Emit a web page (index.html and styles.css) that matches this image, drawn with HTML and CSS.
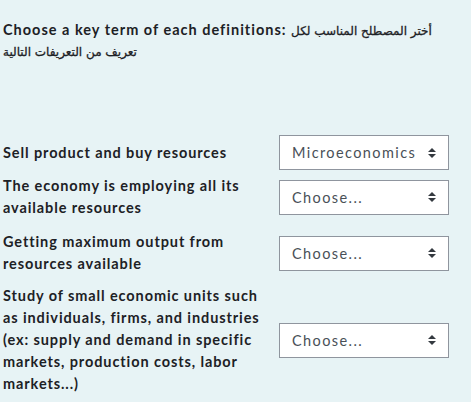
FILE: index.html
```html
<!DOCTYPE html>
<html lang="en">
<head>
<meta charset="utf-8">
<link rel="stylesheet" href="styles.css">
</head>
<body>
<div class="que">
  <p class="qtext">Choose a key term of each definitions: <span class="ar" dir="rtl" lang="ar">أختر المصطلح المناسب لكل تعريف من التعريفات التالية</span></p>
  <div class="answers">
    <div class="row r1">
      <div class="text">Sell product and buy resources</div>
      <div class="select"><span>Microeconomics</span><i class="arr"></i></div>
    </div>
    <div class="row r2">
      <div class="text">The economy is employing all its available resources</div>
      <div class="select"><span>Choose...</span><i class="arr"></i></div>
    </div>
    <div class="row r3">
      <div class="text">Getting maximum output from resources available</div>
      <div class="select"><span>Choose...</span><i class="arr"></i></div>
    </div>
    <div class="row r4">
      <div class="text">Study of small economic units such as individuals, firms, and industries (ex: supply and demand in specific markets, production costs, labor markets...)</div>
      <div class="select"><span>Choose...</span><i class="arr"></i></div>
    </div>
  </div>
</div>
</body>
</html>
```
FILE: styles.css
```css
html, body { margin: 0; padding: 0; background: #fff; }
body { font-family: "Lato", "DejaVu Sans", sans-serif; color: #1d2125; }
.que {
  width: 471px;
  height: 402px;
  background: #e7f3f5;
  box-sizing: border-box;
  padding: 20px 3px 0 3px;
  overflow: hidden;
}
.qtext {
  margin: 0;
  font-weight: 700;
  font-size: 14.5px;
  letter-spacing: 1px;
  line-height: 20px;
  width: 430px;
}
.qtext .ar {
  font-family: "DejaVu Sans", sans-serif;
  font-weight: 400;
  font-size: 12px;
  letter-spacing: 0;
  -webkit-text-stroke: 0.3px #1d2125;
}
.answers { margin-top: 73px; display: flex; flex-direction: column; }
.row { display: flex; align-items: center; justify-content: space-between; width: 446px; }
.r2 { margin-top: 5px; }
.r3 { margin-top: 12px; }
.r4 { margin-top: 10px; }
.text {
  width: 262px;
  font-weight: 700;
  font-size: 14.5px;
  letter-spacing: 0.9px;
  line-height: 22px;
}
.select {
  width: 170px;
  height: 35px;
  box-sizing: border-box;
  border: 1px solid #8f959e;
  background: #fff;
  display: flex;
  align-items: center;
  justify-content: space-between;
  padding: 0 12px 0 12px;
  font-size: 14.5px;
  letter-spacing: 1.4px;
  color: #495057;
}
.arr {
  width: 8px; height: 10px; position: relative; display: block;
}
.arr::before, .arr::after {
  content: ""; position: absolute; left: 0;
  border-left: 4px solid transparent; border-right: 4px solid transparent;
}
.arr::before { top: 0; border-bottom: 4px solid #343a40; }
.arr::after { bottom: 0; border-top: 4px solid #343a40; }
```
